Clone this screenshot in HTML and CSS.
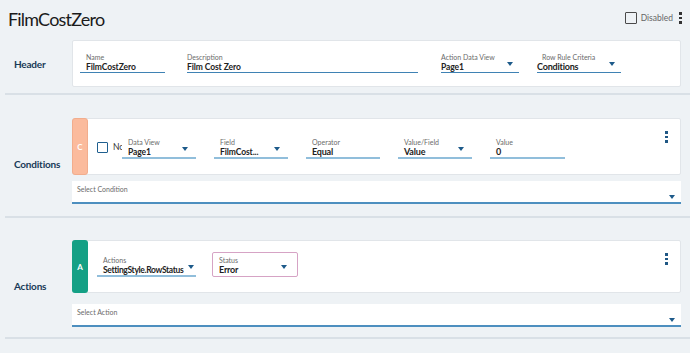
FILE: index.html
```html
<!DOCTYPE html>
<html>
<head>
<meta charset="utf-8">
<link rel="stylesheet" href="styles.css">
</head>
<body>
<div class="topbar">
  <h1 class="title">FilmCostZero</h1>
  <div class="top-actions">
    <span class="box dark"></span>
    <span class="disabled-text">Disabled</span>
    <span class="kebab dark-dots"><i></i><i></i><i></i></span>
  </div>
</div>

<section class="section sec-header">
  <div class="sec-label">Header</div>
  <div class="sec-body">
    <div class="card header-card">
      <div class="field f-name"><span class="flabel">Name</span><span class="fvalue">FilmCostZero</span></div>
      <div class="field f-desc"><span class="flabel">Description</span><span class="fvalue">Film Cost Zero</span></div>
      <div class="field f-adv"><span class="flabel">Action Data View</span><span class="fvalue">Page1<span class="caret"></span></span></div>
      <div class="field f-rrc"><span class="flabel">Row Rule Criteria</span><span class="fvalue big">Conditions<span class="caret"></span></span></div>
    </div>
  </div>
</section>

<section class="section sec-cond">
  <div class="sec-label">Conditions</div>
  <div class="sec-body">
    <div class="card rule-card cond-card">
      <div class="badge badge-c">C</div>
      <span class="box blue"></span>
      <span class="not-text">Nc</span>
      <div class="field light w74 first"><span class="flabel">Data View</span><span class="fvalue">Page1<span class="caret"></span></span></div>
      <div class="field light w74"><span class="flabel">Field</span><span class="fvalue">FilmCost...<span class="caret"></span></span></div>
      <div class="field light w74"><span class="flabel">Operator</span><span class="fvalue big">Equal</span></div>
      <div class="field light w74"><span class="flabel">Value/Field</span><span class="fvalue big">Value<span class="caret"></span></span></div>
      <div class="field light w75"><span class="flabel">Value</span><span class="fvalue big">0</span></div>
      <span class="kebab blue-dots card-kebab"><i></i><i></i><i></i></span>
    </div>
    <div class="select-box"><span class="flabel">Select Condition</span><span class="caret sel-caret"></span></div>
  </div>
</section>

<section class="section sec-act">
  <div class="sec-label">Actions</div>
  <div class="sec-body">
    <div class="card rule-card act-card">
      <div class="badge badge-a">A</div>
      <div class="field light f-actions"><span class="flabel">Actions</span><span class="fvalue big">SettingStyle.RowStatus<span class="caret"></span></span></div>
      <div class="status-box"><span class="flabel">Status</span><span class="fvalue big">Error<span class="caret"></span></span></div>
      <span class="kebab blue-dots card-kebab"><i></i><i></i><i></i></span>
    </div>
    <div class="select-box"><span class="flabel">Select Action</span><span class="caret sel-caret"></span></div>
  </div>
</section>
</body>
</html>
```

FILE: styles.css
```css
* { box-sizing: border-box; }
html, body { margin: 0; padding: 0; }
body {
  background: #eef2f5;
  font-family: Lato, "Open Sans", sans-serif;
  color: #1f1f1f;
  width: 690px;
  height: 353px;
  overflow: hidden;
}
.topbar {
  display: flex;
  justify-content: space-between;
  align-items: flex-start;
  height: 34px;
  padding: 0 8px 0 8px;
}
.title {
  margin: 6px 0 0 0;
  font-weight: 400;
  font-size: 18px;
  line-height: 26px;
  color: #1b1b1b;
  letter-spacing: -0.8px;
}
.top-actions {
  display: flex;
  align-items: center;
  margin-top: 12px;
}
.box {
  display: inline-block;
  width: 12px;
  height: 12px;
  border: 1.5px solid #444;
  border-radius: 1px;
  background: #fff;
  flex: none;
}
.box.dark { border-color: #4a4a4a; background: transparent; }
.disabled-text {
  font-size: 8.5px;
  color: #666;
  margin-left: 4px;
  margin-right: 6px;
}
.kebab {
  display: inline-flex;
  flex-direction: column;
  gap: 2px;
  width: 3px;
}
.kebab i {
  display: block;
  width: 2.5px;
  height: 2.5px;
  background: #333;
}
.kebab.blue-dots i { background: #1f5784; }

.section {
  display: flex;
  margin-left: 5px;
  border-bottom: 2px solid #d9e0e6;
}
.sec-label {
  width: 67px;
  flex: none;
  padding-left: 9px;
  font-weight: 700;
  font-size: 10px;
  letter-spacing: -0.2px;
  color: #183a57;
  display: flex;
  align-items: center;
}
.sec-body {
  flex: 1;
  margin-right: 9px;
}
.sec-header { padding: 6px 0 6px 0; }
.sec-header .sec-label { padding-top: 1px; }
.sec-cond { padding: 23px 0 12px 0; }
.sec-cond .sec-label { padding-top: 5px; }
.sec-act { padding: 22px 0 10px 0; }
.sec-act .sec-label { padding-top: 4px; }

.card {
  background: #fff;
  border: 1px solid #e1e5e9;
  border-radius: 2px;
  display: flex;
  align-items: flex-start;
}
.header-card {
  height: 47px;
  padding: 12px 0 0 7px;
}
.field {
  display: flex;
  flex-direction: column;
  border-bottom: 1.5px solid #3f82b4;
  padding-left: 6px;
  flex: none;
}
.field.light { border-bottom: 2px solid #91bedb; }
.flabel {
  display: block;
  font-size: 7px;
  line-height: 8px;
  color: #6b6b6b;
  white-space: nowrap;
}
.fvalue {
  display: flex;
  justify-content: space-between;
  align-items: center;
  font-size: 8.5px;
  line-height: 10px;
  font-weight: 700;
  color: #222;
  padding-right: 6px;
  height: 11px;
  white-space: nowrap;
  letter-spacing: -0.1px;
}
.fvalue.big { font-size: 9px; letter-spacing: -0.2px; }
.caret {
  display: inline-block;
  width: 0;
  height: 0;
  border-left: 3.5px solid transparent;
  border-right: 3.5px solid transparent;
  border-top: 4px solid #1d5a8a;
  margin-top: -6px;
  flex: none;
}
.f-name { width: 85px; padding-left: 6px; }
.f-desc { width: 231px; margin-left: 22px; padding-left: 0; }
.f-adv { width: 78px; margin-left: 23px; padding-left: 0; }
.f-rrc { width: 84px; margin-left: 18px; padding-left: 0; }
.f-rrc .flabel { padding-left: 5px; }

.rule-card { position: relative; }
.cond-card { height: 57px; }
.act-card { height: 53px; }
.badge {
  width: 16px;
  align-self: stretch;
  margin: -1px 0 -1px -1px;
  border-radius: 3px;
  color: #fff;
  font-weight: 700;
  font-size: 8px;
  display: flex;
  align-items: center;
  justify-content: center;
  flex: none;
}
.badge-c { background: #fbbb9d; border: 1px solid #f2ad8d; }
.badge-a { background: #14a085; }
.box.blue {
  width: 11px;
  height: 11px;
  border: 1.5px solid #1f5f8f;
  margin-left: 9px;
  margin-top: 23px;
}
.not-text {
  font-size: 8.5px;
  line-height: 10px;
  color: #333;
  margin-left: 5px;
  width: 9px;
  overflow: hidden;
  margin-top: 23px;
}
.cond-card .field { margin-top: 19px; padding-left: 6px; }
.w74 { width: 74px; margin-left: 18px; }
.w74.first { margin-left: 0; }
.w75 { width: 75px; margin-left: 18px; }
.cond-card .fvalue { padding-right: 8px; }

.card-kebab {
  position: absolute;
  right: 12px;
  top: 12px;
}
.f-actions {
  width: 99px;
  margin-left: 9px;
  margin-top: 15px;
}
.f-actions .fvalue { padding-right: 2px; font-size: 8.5px; letter-spacing: -0.35px; }
.f-actions .caret { margin-left: 3px; }
.status-box {
  width: 86px;
  height: 25px;
  margin-left: 16px;
  margin-top: 11px;
  border: 1px solid #d6a3c5;
  border-radius: 2px;
  padding: 3px 10px 0 6px;
  display: flex;
  flex-direction: column;
}
.status-box .fvalue { padding-right: 0; }

.select-box {
  margin-top: 6px;
  height: 23px;
  background: #fff;
  border-bottom: 2px solid #4d8fbf;
  position: relative;
  padding: 4px 0 0 5px;
}
.sec-act .select-box { margin-top: 11px; }
.sel-caret {
  position: absolute;
  right: 6px;
  top: 14px;
  margin: 0;
}
```
